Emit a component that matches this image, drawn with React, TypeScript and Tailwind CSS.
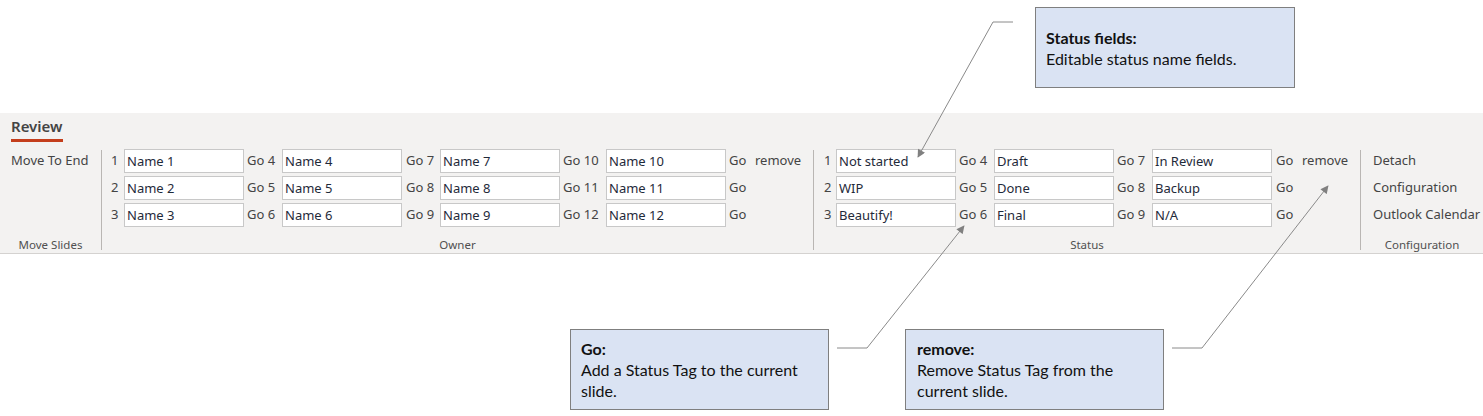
import React from "react";

const Box = ({ v }: { v: string }) => (
  <div className="w-[120px] h-[24px] bg-white border border-[#c8c8c8] flex items-center pl-[2px] text-[#1f2a3a] leading-none whitespace-nowrap">
    {v}
  </div>
);

const Lbl = ({ t, w, pl = 0 }: { t: string; w: number; pl?: number }) => (
  <div
    className="h-[24px] flex items-center text-[#444] whitespace-nowrap"
    style={{ width: w, paddingLeft: pl }}
  >
    {t}
  </div>
);

const GroupLabel = ({ t }: { t: string }) => (
  <div className="h-[14px] mb-[1px] flex items-center justify-center text-[11.5px] text-[#505050] leading-none">
    {t}
  </div>
);

const Sep = () => <div className="w-px bg-[#b9b6b3] my-[3px] self-stretch" />;

export default function App() {
  const owner = [
    ["1", "Name 1", "Go 4", "Name 4", "Go 7", "Name 7", "Go 10", "Name 10", "Go", "remove"],
    ["2", "Name 2", "Go 5", "Name 5", "Go 8", "Name 8", "Go 11", "Name 11", "Go", ""],
    ["3", "Name 3", "Go 6", "Name 6", "Go 9", "Name 9", "Go 12", "Name 12", "Go", ""],
  ];
  const status = [
    ["1", "Not started", "Go 4", "Draft", "Go 7", "In Review", "Go", "remove"],
    ["2", "WIP", "Go 5", "Done", "Go 8", "Backup", "Go", ""],
    ["3", "Beautify!", "Go 6", "Final", "Go 9", "N/A", "Go", ""],
  ];
  return (
    <div className="relative w-[1483px] h-[416px] bg-white overflow-hidden font-['Noto_Sans',sans-serif] text-[13px]">
      <div className="h-[113px]" />
      <div className="h-[141px] bg-[#f3f2f1] border-b border-[#d4d2d0] flex flex-col">
        {/* tab row */}
        <div className="h-[34px] pl-[11px] pt-[2px] flex flex-col items-start">
          <div className="text-[15px] font-semibold text-[#444] leading-[22px]">Review</div>
          <div className="w-[52px] h-[3px] bg-[#c43e1c] mt-[2px]" />
        </div>
        {/* groups */}
        <div className="flex flex-1">
          {/* Move Slides */}
          <div className="w-[101px] flex flex-col justify-between">
            <div className="pt-[2px] pl-[11px]">
              <Lbl t="Move To End" w={90} />
            </div>
            <GroupLabel t="Move Slides" />
          </div>
          <Sep />
          {/* Owner */}
          <div className="w-[711px] flex flex-col justify-between">
            <div className="pt-[2px] pl-[9px] flex flex-col gap-[3px]">
              {owner.map((r, i) => (
                <div key={i} className="flex">
                  <Lbl t={r[0]} w={13} />
                  <Box v={r[1]} />
                  <Lbl t={r[2]} w={38} pl={3} />
                  <Box v={r[3]} />
                  <Lbl t={r[4]} w={38} pl={4} />
                  <Box v={r[5]} />
                  <Lbl t={r[6]} w={46} pl={3} />
                  <Box v={r[7]} />
                  <Lbl t={r[8]} w={29} pl={3} />
                  <Lbl t={r[9]} w={50} />
                </div>
              ))}
            </div>
            <GroupLabel t="Owner" />
          </div>
          <Sep />
          {/* Status */}
          <div className="w-[546px] flex flex-col justify-between">
            <div className="pt-[2px] pl-[10px] flex flex-col gap-[3px]">
              {status.map((r, i) => (
                <div key={i} className="flex">
                  <Lbl t={r[0]} w={12} />
                  <Box v={r[1]} />
                  <Lbl t={r[2]} w={38} pl={3} />
                  <Box v={r[3]} />
                  <Lbl t={r[4]} w={38} pl={3} />
                  <Box v={r[5]} />
                  <Lbl t={r[6]} w={30} pl={4} />
                  <Lbl t={r[7]} w={50} />
                </div>
              ))}
            </div>
            <GroupLabel t="Status" />
          </div>
          <Sep />
          {/* Configuration */}
          <div className="flex-1 flex flex-col justify-between">
            <div className="pt-[2px] pl-[12px] flex flex-col gap-[3px]">
              <Lbl t="Detach" w={110} />
              <Lbl t="Configuration" w={110} />
              <Lbl t="Outlook Calendar" w={110} />
            </div>
            <GroupLabel t="Configuration" />
          </div>
        </div>
      </div>

      {/* connector lines */}
      <svg className="absolute inset-0 pointer-events-none" width="1483" height="416">
        <defs>
          <marker id="ah" viewBox="0 0 10 10" refX="9" refY="5" markerWidth="10" markerHeight="8" markerUnits="userSpaceOnUse" orient="auto">
            <path d="M0 0 L10 5 L0 10 Z" fill="#808080" />
          </marker>
        </defs>
        <polyline points="1013,22 993,22 918,157" fill="none" stroke="#8a8a8a" strokeWidth="1" markerEnd="url(#ah)" />
        <polyline points="837,348 867,348 964,226" fill="none" stroke="#8a8a8a" strokeWidth="1" markerEnd="url(#ah)" />
        <polyline points="1172,348 1202,348 1328,186" fill="none" stroke="#8a8a8a" strokeWidth="1" markerEnd="url(#ah)" />
      </svg>

      {/* callouts */}
      <div className="absolute left-[1035px] top-[7px] w-[260px] h-[81px] bg-[#dae3f3] border border-[#7f7f7f] flex flex-col justify-center pl-[10px] font-['Lato',sans-serif] text-[16px] leading-[21px] text-[#111]">
        <div className="font-bold">Status fields:</div>
        <div>Editable status name fields.</div>
      </div>
      <div className="absolute left-[570px] top-[329px] w-[259px] h-[81px] bg-[#dae3f3] border border-[#7f7f7f] flex flex-col justify-center pl-[10px] pr-[8px] font-['Lato',sans-serif] text-[16px] leading-[21px] text-[#111]">
        <div className="font-bold">Go:</div>
        <div className="w-[225px]">Add a Status Tag to the current slide.</div>
      </div>
      <div className="absolute left-[905px] top-[329px] w-[259px] h-[81px] bg-[#dae3f3] border border-[#7f7f7f] flex flex-col justify-center pl-[11px] pr-[8px] font-['Lato',sans-serif] text-[16px] leading-[21px] text-[#111]">
        <div className="font-bold">remove:</div>
        <div className="w-[205px]">Remove Status Tag from the current slide.</div>
      </div>
    </div>
  );
}
